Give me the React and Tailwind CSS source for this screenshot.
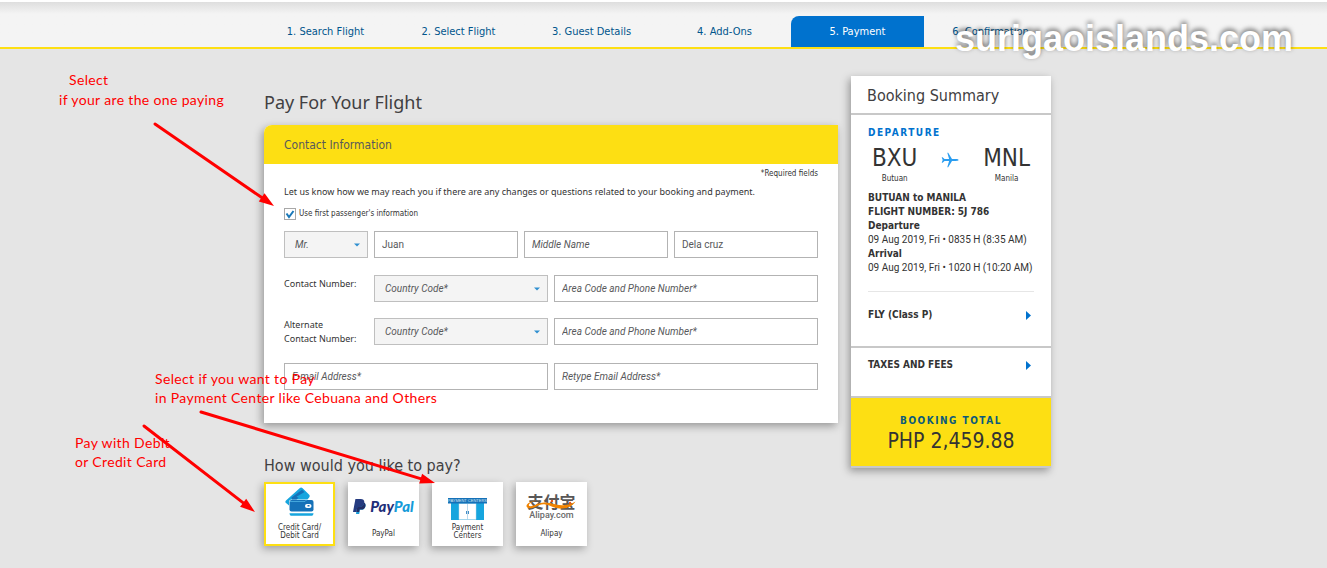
import { useState } from 'react';

const steps = [
  '1. Search Flight',
  '2. Select Flight',
  '3. Guest Details',
  '4. Add-Ons',
  '5. Payment',
  '6. Confirmation',
];

const field =
  "h-[27px] w-full min-w-0 border border-[#b3b3b3] bg-white px-[7px] font-['Roboto',sans-serif] text-[10px] text-[#58595b] placeholder:italic placeholder:text-[#58595b] placeholder:opacity-100 outline-none";

const SelectBox = ({ label, options }) => (
  <div className="relative">
    <select
      aria-label={label}
      className="h-[27px] w-full appearance-none border border-[#bfbfbf] bg-[#f4f4f4] pr-5 pl-[10px] font-['Roboto',sans-serif] text-[10px] text-[#58595b] italic outline-none"
    >
      {options.map((o) => (
        <option key={o}>{o}</option>
      ))}
    </select>
    <svg className="pointer-events-none absolute top-3 right-2 h-[4px] w-[6px]" viewBox="0 0 6 4">
      <path d="M0 0.5h6L3 3.5z" fill="#2f8fd0" />
    </svg>
  </div>
);

const CardIcon = () => (
  <svg className="mb-1 h-[30px] w-[30px]" viewBox="0 0 30 30">
    <path d="M1 13.500 14.600 1.200a2.200 2.200 0 0 1 3 0L24 7.600a2 2 0 0 1 .3 2.600L22.500 12.500H6.500C5 12.500 4 13.500 4 15v3.500L1 16a1.700 1.700 0 0 1 0-2.500z" fill="#16a5de" />
    <path d="M6.500 10.500 17 2.800l3 2.800-8.500 6.900H7z" fill="#1571b8" />
    <path d="M11.500 9.800 20 4.800l2 2-7.500 4.500z" fill="#16a5de" />
    <rect x="4.500" y="13" width="24" height="11.500" rx="2" fill="#1571b8" />
    <path d="M5 14.500h15l1.500-1.500" fill="none" stroke="#4fb4e4" strokeWidth=".8" />
    <rect x="20" y="17" width="6.500" height="4" rx="2" fill="#fff" />
    <rect x="22.500" y="18" width="2" height="1.500" fill="#1571b8" />
    <path d="M4.500 26.200h24c0 1.700-1 2.600-2.600 2.600H7c-1.600 0-2.500-.9-2.500-2.600z" fill="#16a5de" />
  </svg>
);

const PayPalIcon = () => (
  <div className="mt-1 flex items-center gap-1">
    <svg className="h-[15px] w-[13px]" viewBox="0 0 13 15">
      <path d="M4.500 3.500h5.500c2.200.5 3 1.900 2.500 4-.6 2.400-2.200 3.300-4.500 3.300H6.900L6.200 15H3z" fill="#179bd7" />
      <path d="M2.400 0h5.400c2.600 0 3.900 1.500 3.400 4-.5 2.800-2.400 4-5 4H4.300l-.9 5H0z" fill="#253b80" />
      <path d="M4.300 8h1.900c2.600 0 4.500-1.200 5-4l.05-.4c.9.7 1.500 1.900 1.100 3.600-.5 2.300-2 3.400-4.200 3.400H6.600L6.200 13H3.400z" fill="#222d65" />
    </svg>
    <span className="font-['Lato'] text-[15px] leading-4 font-black text-[#1f2f7a] italic">
      Pay<span className="text-[#159bd9]">Pal</span>
    </span>
  </div>
);

const CenterIcon = () => (
  <svg className="mt-[10px] h-[22px] w-[39px]" viewBox="0 0 39 22">
    <rect x="3" y="5" width="33" height="17" fill="#16a5de" />
    <rect x="11" y="5.500" width="17" height="16" fill="#fff" stroke="#bcd9ec" strokeWidth=".5" />
    <path d="M19.500 5.500V21.500" stroke="#9cc7e2" strokeWidth=".7" />
    <path d="M18.500 13v3M20.500 13v3" stroke="#1571b8" strokeWidth=".8" />
    <rect width="39" height="5.500" fill="#1571b8" />
    <text
      x="19.500"
      y="4.200"
      textAnchor="middle"
      fontSize="4"
      fill="#d5e8f5"
      fontFamily="Liberation Sans, sans-serif"
    >
      PAYMENT CENTERS
    </text>
  </svg>
);

const AlipayIcon = () => (
  <div className="relative mt-1 flex flex-col items-center">
    <span className="font-['Noto_Sans_CJK_SC',sans-serif] text-[16px] leading-[18px] font-bold text-[#595757]">
      支付宝
    </span>
    <svg className="absolute top-[7px] left-1/2 h-[11px] w-[50px] -translate-x-1/2" viewBox="0 0 50 11">
      <path
        d="M11 1.500C5 2 .5 4.500.5 7c0 2.800 5 3 9 1 3.500-1.700 6-3.200 10-2.500C25 6.500 29 9.800 36 9.600c6-.2 11-3 13.500-7C46 5 41 6.400 36 6.200 29 6 25 3.800 19 3.600 12 3.400 9 7.200 4.500 7.200 1 7 3 3 11 1.500z"
        fill="#f08300"
      />
      <circle cx="26" cy="2" r="1.200" fill="#e95513" />
      <circle cx="44" cy="4" r="1.200" fill="#e95513" />
    </svg>
    <span className="font-['Roboto'] text-[9px] leading-[10px] font-medium text-[#6a6a6a]">Alipay.com</span>
  </div>
);

const methods = [
  { id: 'card', lines: ['Credit Card/', 'Debit Card'], icon: <CardIcon /> },
  { id: 'paypal', lines: ['PayPal'], icon: <PayPalIcon /> },
  { id: 'center', lines: ['Payment', 'Centers'], icon: <CenterIcon /> },
  { id: 'alipay', lines: ['Alipay'], icon: <AlipayIcon /> },
];

const ContactForm = () => {
  const [first, setFirst] = useState(true);

  return (
    <form className="rounded-tl-lg bg-white shadow-[-2px_3px_8px_rgba(0,0,0,0.35)]">
      <h2 className="flex h-[39px] items-center rounded-tl-lg bg-[#fddf13] px-5 text-[12px] text-[#58595b]">
        Contact Information
      </h2>
      <div className="px-5 pt-1 pb-[33px]">
        <p className="text-right text-[8px] leading-3">*Required fields</p>
        <p className="mt-[5px] font-['Noto_Sans',sans-serif] text-[9px] leading-[14px]">
          Let us know how we may reach you if there are any changes or questions related to your booking and payment.
        </p>
        <label className="mt-[7px] flex h-4 items-center gap-[3px] text-[8px]">
          <span className="relative h-3 w-3">
            <input
              type="checkbox"
              checked={first}
              onChange={(e) => setFirst(e.target.checked)}
              className="block h-3 w-3 appearance-none border border-[#a8a8a8] bg-white"
            />
            {first && (
              <svg className="pointer-events-none absolute top-0 left-0 h-3 w-3" viewBox="0 0 12 12">
                <path d="M2.500 5.500 5 9l4.500-6" fill="none" stroke="#1a78b8" strokeWidth="2" />
              </svg>
            )}
          </span>
          Use first passenger's information
        </label>

        <div className="mt-[9px] grid grid-cols-[84px_1fr_1fr_1fr] gap-[6px]">
          <SelectBox label="Title" options={['Mr.', 'Ms.']} />
          <input aria-label="First Name" defaultValue="Juan" className={field} />
          <input aria-label="Middle Name" placeholder="Middle Name" className={field} />
          <input aria-label="Last Name" defaultValue="Dela cruz" className={field} />
        </div>
        <div className="mt-[17px] grid grid-cols-[84px_174px_1fr] gap-[6px]">
          <label htmlFor="phone" className="pt-[2px] font-['Noto_Sans',sans-serif] text-[9px] leading-[14px]">
            Contact Number:
          </label>
          <SelectBox label="Country Code" options={['Country Code*']} />
          <input id="phone" placeholder="Area Code and Phone Number*" className={field} />
        </div>
        <div className="mt-4 grid grid-cols-[84px_174px_1fr] gap-[6px]">
          <label htmlFor="phone2" className="font-['Noto_Sans',sans-serif] text-[9px] leading-[14px]">
            Alternate
            <br />
            Contact Number:
          </label>
          <SelectBox label="Alternate Country Code" options={['Country Code*']} />
          <input id="phone2" placeholder="Area Code and Phone Number*" className={field} />
        </div>
        <div className="mt-[17px] grid grid-cols-2 gap-[6px]">
          <input aria-label="E-mail Address" placeholder="E-mail Address*" className={field} />
          <input aria-label="Retype Email Address" placeholder="Retype Email Address*" className={field} />
        </div>
      </div>
    </form>
  );
};

const Airport = ({ code, city }) => (
  <div className="text-center">
    <p className="text-[24px] leading-7">{code}</p>
    <p className="mt-px text-[8px] leading-3">{city}</p>
  </div>
);

const SideToggle = ({ children }) => (
  <button type="button" className="flex w-full items-center justify-between pr-[3px] text-left text-[10px] leading-[14px] font-bold">
    {children}
    <svg className="h-[9px] w-[5px]" viewBox="0 0 5 9">
      <path d="M0 0v9l5-4.500z" fill="#0072ce" />
    </svg>
  </button>
);

const Summary = () => (
  <aside className="w-[200px] shrink-0 self-start border-b-2 border-[#c8c8c8] bg-white shadow-[-2px_3px_8px_rgba(0,0,0,0.35)]">
    <h2 className="flex h-[39px] items-center border-b-2 border-[#c8c8c8] px-4 pt-[2px] text-[16px] text-[#414042]">
      Booking Summary
    </h2>
    <div className="border-b-2 border-[#c8c8c8] px-[17px] pt-[11px] pb-6">
      <h3 className="text-[10px] leading-[14px] font-bold tracking-[0.15em] text-[#0072ce]">DEPARTURE</h3>
      <div className="mt-1 flex items-start justify-between px-1">
        <Airport code="BXU" city="Butuan" />
        <svg className="mt-2 h-[16px] w-[18px]" viewBox="0 0 18 16">
          <path
            d="M17.500 8c0-.6-1-.9-2.500-.9h-4L7.200.8H6.300l1.800 6.300H3.500L1.600 5.200H.7L1.700 8 .7 10.800h.9L3.500 8.900h4.600l-1.800 6.300h.9L11 8.900h4c1.500 0 2.500-.3 2.500-.9z"
            fill="#2a9df0"
          />
        </svg>
        <Airport code="MNL" city="Manila" />
      </div>
      <div className="mt-[6px] text-[10px] leading-[14px]">
        <p className="font-bold">BUTUAN to MANILA</p>
        <p className="font-bold">FLIGHT NUMBER: 5J 786</p>
        <p className="font-bold">Departure</p>
        <p className="font-['Roboto',sans-serif] whitespace-nowrap">09 Aug 2019, Fri • 0835 H (8:35 AM)</p>
        <p className="font-bold">Arrival</p>
        <p className="font-['Roboto',sans-serif] whitespace-nowrap">09 Aug 2019, Fri • 1020 H (10:20 AM)</p>
      </div>
      <hr className="mt-4 mb-4 border-[#e6e6e6]" />
      <SideToggle>FLY (Class P)</SideToggle>
    </div>
    <div className="border-b-2 border-[#c8c8c8] px-[17px] pt-[10px] pb-6">
      <SideToggle>TAXES AND FEES</SideToggle>
    </div>
    <div className="bg-[#fddf13] pt-4 pb-3 text-center">
      <p className="text-[10px] leading-[14px] font-bold tracking-[0.15em] text-[#0b5a7a]">BOOKING TOTAL</p>
      <p className="text-[21px] leading-[26px]">PHP 2,459.88</p>
    </div>
  </aside>
);

const Arrow = ({ from, to }) => {
  const angle = Math.atan2(to[1] - from[1], to[0] - from[0]);
  const bx = to[0] - 10 * Math.cos(angle);
  const by = to[1] - 10 * Math.sin(angle);
  return (
    <g>
      <path d={`M${from[0]} ${from[1]}L${bx} ${by}`} stroke="#ff0000" strokeWidth="3" strokeLinecap="round" />
      <path d="M0 0-15-5v10z" fill="#ff0000" transform={`translate(${to[0]} ${to[1]}) rotate(${(angle * 180) / Math.PI})`} />
    </g>
  );
};

// hand-placed tips drawn over the page, anchored to the centred column
const Notes = () => (
  <div className="pointer-events-none absolute inset-0 font-['Lato'] text-[14px] leading-[19px] tracking-wide whitespace-nowrap text-[#ff0000]">
    <p className="absolute top-[70px] left-[-190px]">Select</p>
    <p className="absolute top-[90px] left-[-200px]">if your are the one paying</p>
    <p className="absolute top-[369px] left-[-104px]">
      Select if you want to Pay
      <br />
      in Payment Center like Cebuana and Others
    </p>
    <p className="absolute top-[433px] left-[-184px]">
      Pay with Debit
      <br />
      or Credit Card
    </p>
    <svg className="absolute top-0 left-0 h-[560px] w-full overflow-visible" fill="none">
      <Arrow from={[-104, 124]} to={[15, 206]} />
      <Arrow from={[-58, 412]} to={[176, 483]} />
      <Arrow from={[-115, 426]} to={[-4, 512]} />
    </svg>
  </div>
);

export default function App() {
  const [method, setMethod] = useState('card');

  return (
    <div className="relative min-h-screen overflow-hidden bg-[#e5e5e5] font-['DejaVu_Sans_Condensed','Noto_Sans',sans-serif] text-[#333333]">
      <header className="border-t-2 border-b-2 border-t-white border-b-[#fddf13] bg-[#f4f4f4] bg-linear-to-b from-[#dedede] to-[#f4f4f4] to-[12px] pt-[14px] pr-[11px]">
        <nav className="mx-auto grid max-w-[798px] grid-cols-6">
          {steps.map((s, i) => (
            <a
              key={s}
              href="#"
              className={`flex h-[31px] items-center justify-center pt-px text-[11px] ${i === 4 ? 'rounded-tl-lg bg-[#0072ce] text-white' : 'text-[#00558c]'}`}
            >
              {s}
            </a>
          ))}
        </nav>
      </header>

      <div className="pr-[11px]">
        <main className="mx-auto flex max-w-[798px] gap-[13px] pt-[27px] pr-[6px] pb-5 pl-[5px]">
          <div className="min-w-0 flex-1">
            <h1 className="pt-[14px] pb-[11px] font-['Noto_Sans',sans-serif] text-[18px] leading-6 text-[#414042]">
              Pay For Your Flight
            </h1>
            <ContactForm />
            <h2 className="mt-[33px] text-[16px] leading-5 text-[#414042]">How would you like to pay?</h2>
            <div className="mt-[6px] flex gap-[13px]">
              {methods.map((m) => (
                <button
                  key={m.id}
                  type="button"
                  onClick={() => setMethod(m.id)}
                  className={`flex h-16 w-[71px] flex-col items-center border-2 bg-white text-[8px] leading-2 shadow-[-2px_3px_8px_rgba(0,0,0,0.3)] ${m.id === method ? 'border-[#fddf13]' : 'border-white'}`}
                >
                  <span className="flex h-10 items-center">{m.icon}</span>
                  <span className={`flex flex-col ${m.lines.length === 1 ? 'pt-[6px]' : ''}`}>
                    {m.lines.map((l) => (
                      <span key={l}>{l}</span>
                    ))}
                  </span>
                </button>
              ))}
            </div>
          </div>
          <Summary />
        </main>
      </div>

      <div className="pointer-events-none absolute inset-0 pr-[11px]">
        <div className="relative mx-auto h-full max-w-[798px]">
          <Notes />
        </div>
      </div>
      <p className="pointer-events-none absolute top-[19px] right-[34px] font-['Liberation_Sans'] text-[36px] leading-10 font-bold text-white [text-shadow:0_-2px_5px_rgba(0,0,0,0.6)]">
        surigaoislands.com
      </p>
    </div>
  );
}
